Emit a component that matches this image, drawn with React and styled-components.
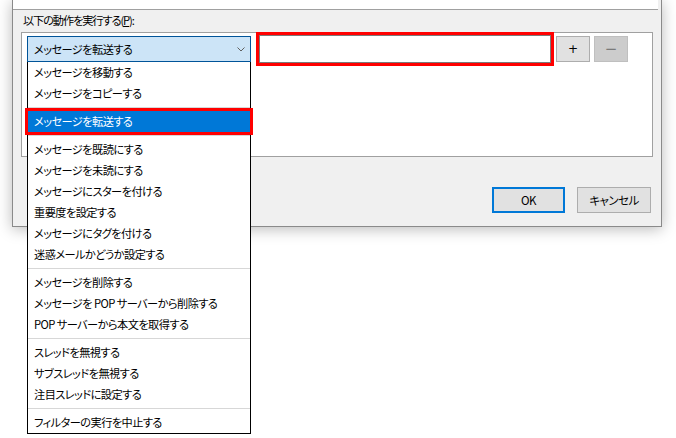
import React from 'react';
import styled, { createGlobalStyle } from 'styled-components';

const GlobalStyle = createGlobalStyle`
  html, body {
    margin: 0;
    background: #ffffff;
  }
  body {
    font-family: "Noto Sans CJK JP", "Noto Sans", sans-serif;
    font-size: 11.2px;
    letter-spacing: -0.55px;
    color: #000;
    font-feature-settings: "palt";
  }
`;

const Page = styled.div`
  width: 676px;
  height: 438px;
  overflow: hidden;
  padding-left: 12px;
  box-sizing: border-box;
`;

const Dialog = styled.div`
  width: 650px;
  box-sizing: border-box;
  background: #f0f0f0;
  border: 1px solid #8a8a8a;
  border-top: none;
  box-shadow: 0 2px 14px rgba(0, 0, 0, 0.28);
  padding: 0 8px 13px 8px;
  display: flex;
  flex-direction: column;
`;

const TopPane = styled.div`
  height: 9px;
  margin: 0 -5px 0 -8px;
  background: #ffffff;
  border-bottom: 1px solid #a0a0a0;
`;

const Label = styled.div`
  margin: 2px 0 0 2px;
  height: 16px;
  line-height: 16px;
  letter-spacing: -1.1px;

  u {
    text-decoration: underline;
    text-underline-offset: 1px;
  }
`;

const ActionBox = styled.div`
  margin-top: 4px;
  height: 125px;
  box-sizing: border-box;
  background: #ffffff;
  border: 1px solid #a0a0a0;
  padding: 2px 0 0 5px;
`;

const ActionRow = styled.div`
  display: flex;
  align-items: center;
  height: 28px;
`;

const ComboWrap = styled.div`
  position: relative;
  width: 224px;
`;

const Combo = styled.div`
  height: 26px;
  box-sizing: border-box;
  background: #cce4f7;
  border: 1px solid #005499;
  display: flex;
  align-items: center;
  justify-content: space-between;
  padding: 0 5px 0 6px;
  line-height: 16px;
`;

const Dropdown = styled.div`
  position: absolute;
  top: 100%;
  left: 0;
  width: 224px;
  box-sizing: border-box;
  background: #ffffff;
  border: 1px solid #000;
  border-top: none;
  z-index: 5;
`;

const Item = styled.div`
  height: 21px;
  line-height: 21px;
  padding-left: 6px;
  white-space: nowrap;
  background: ${p => (p.$selected ? '#0078d7' : 'transparent')};
  color: ${p => (p.$selected ? '#ffffff' : '#000000')};
  outline: ${p => (p.$marked ? '3px solid #ff0000' : 'none')};
`;

const Separator = styled.div`
  height: 1px;
  margin: 3px 0;
  background: #d7d7d7;
`;

const TextField = styled.div`
  margin-left: 8px;
  width: 292px;
  height: 28px;
  box-sizing: border-box;
  background: #ffffff;
  border: 1px solid #7a7a7a;
  outline: 3px solid #ff0000;
`;

const SmallButton = styled.div`
  width: 34px;
  height: 26px;
  box-sizing: border-box;
  margin-left: ${p => p.$gap}px;
  display: flex;
  align-items: center;
  justify-content: center;
  background: ${p => (p.$disabled ? '#cccccc' : '#e1e1e1')};
  border: 1px solid ${p => (p.$disabled ? '#bfbfbf' : '#adadad')};
  color: ${p => (p.$disabled ? '#7a7a7a' : '#000')};
  font-family: "DejaVu Sans", sans-serif;
  font-size: ${p => (p.$disabled ? 15 : 12)}px;
  letter-spacing: 0;
`;

const ButtonRow = styled.div`
  display: flex;
  justify-content: flex-end;
  gap: 12px;
  margin-top: 30px;
  padding-right: 2px;
`;

const DialogButton = styled.div`
  width: ${p => p.$width}px;
  height: 26px;
  box-sizing: border-box;
  display: flex;
  align-items: center;
  justify-content: center;
  background: #e1e1e1;
  border: ${p => (p.$default ? '2px solid #0078d7' : '1px solid #adadad')};
  line-height: 16px;
  font-size: 11.5px;
`;

const Chevron = () => (
  <svg width="8" height="5" viewBox="0 0 8 5">
    <path d="M0.5 0.5 L4 4 L7.5 0.5" fill="none" stroke="#606060" strokeWidth="1" />
  </svg>
);

const groups = [
  ['メッセージを移動する', 'メッセージをコピーする'],
  ['メッセージを転送する'],
  [
    'メッセージを既読にする',
    'メッセージを未読にする',
    'メッセージにスターを付ける',
    '重要度を設定する',
    'メッセージにタグを付ける',
    '迷惑メールかどうか設定する',
  ],
  ['メッセージを削除する', 'メッセージを POP サーバーから削除する', 'POP サーバーから本文を取得する'],
  ['スレッドを無視する', 'サブスレッドを無視する', '注目スレッドに設定する'],
  ['フィルターの実行を中止する'],
];

const selected = 'メッセージを転送する';

const App = () => (
  <Page>
    <GlobalStyle />
    <Dialog>
      <TopPane />
      <Label>以下の動作を実行する(<u>P</u>):</Label>
      <ActionBox>
        <ActionRow>
          <ComboWrap>
            <Combo>
              <span>{selected}</span>
              <Chevron />
            </Combo>
            <Dropdown>
              {groups.map((group, gi) => (
                <React.Fragment key={gi}>
                  {gi > 0 && <Separator />}
                  {group.map(label => (
                    <Item key={label} $selected={label === selected} $marked={label === selected}>
                      {label}
                    </Item>
                  ))}
                </React.Fragment>
              ))}
            </Dropdown>
          </ComboWrap>
          <TextField />
          <SmallButton $gap={5}>+</SmallButton>
          <SmallButton $gap={4} $disabled>−</SmallButton>
        </ActionRow>
      </ActionBox>
      <ButtonRow>
        <DialogButton $width={73} $default>OK</DialogButton>
        <DialogButton $width={74}>キャンセル</DialogButton>
      </ButtonRow>
    </Dialog>
  </Page>
);

export default App;
